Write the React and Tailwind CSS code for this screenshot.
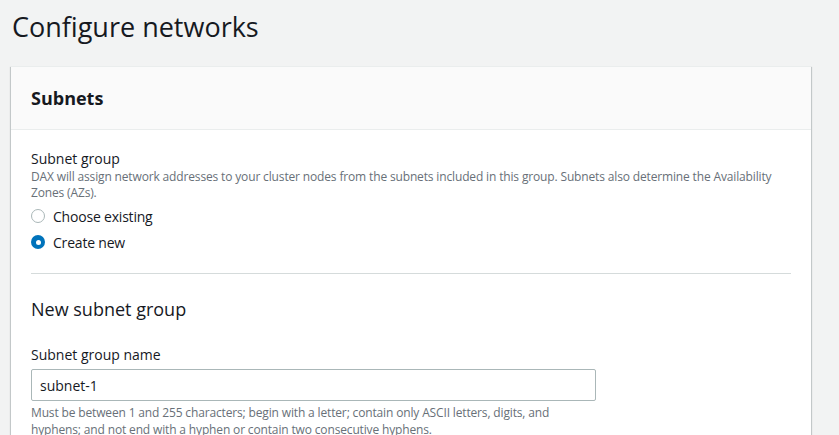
import { useState } from 'react';

const font = { fontFamily: '"Open Sans", "Noto Sans", Arial, sans-serif' };

function Radio({ checked, label, onClick }) {
  return (
    <label className="flex items-center gap-[8px] h-[26px] cursor-pointer" onClick={onClick}>
      {checked ? (
        <span className="w-[14px] h-[14px] rounded-full bg-[#0073bb] flex items-center justify-center">
          <span className="w-[5px] h-[5px] rounded-full bg-white" />
        </span>
      ) : (
        <span className="w-[14px] h-[14px] rounded-full border border-[#aab7b8] bg-white" />
      )}
      <span className="text-[14px] tracking-[-0.2px] text-[#16191f]">{label}</span>
    </label>
  );
}

export default function App() {
  const [mode, setMode] = useState('new');

  return (
    <div className="min-h-screen bg-[#f2f3f3] text-[#16191f] overflow-hidden" style={font}>
      <h1 className="pl-[12px] pt-[10px] text-[27px] leading-[34px] font-normal">Configure networks</h1>

      {/* Subnets card */}
      <div className="ml-[11px] mt-[22px] w-[800px] bg-white border-t border-[#eaeded] shadow-[0_1px_1px_0_rgba(0,28,36,0.3),1px_1px_1px_0_rgba(0,28,36,0.15),-1px_1px_1px_0_rgba(0,28,36,0.15)]">
        <div className="h-[63px] bg-[#fafafa] border-b border-[#eaeded] px-[20px] flex items-center">
          <h2 className="text-[18px] font-bold">Subnets</h2>
        </div>

        <div className="px-[20px] pt-[19px] pb-[20px]">
          <div className="text-[14px] leading-[20px]">Subnet group</div>
          <p className="text-[12px] leading-[16px] tracking-[-0.15px] text-[#687078]">
            DAX will assign network addresses to your cluster nodes from the subnets included in this group. Subnets also determine the Availability Zones (AZs).
          </p>
          <div className="mt-[2px] flex flex-col">
            <Radio checked={mode === 'existing'} label="Choose existing" onClick={() => setMode('existing')} />
            <Radio checked={mode === 'new'} label="Create new" onClick={() => setMode('new')} />
          </div>

          <div className="mt-[18px] border-t border-[#d5dbdb]" />

          <h3 className="mt-[23px] text-[18px] leading-[24px] font-normal">New subnet group</h3>

          <div className="mt-[24px] text-[14px] leading-[20px]">Subnet group name</div>
          <input
            className="mt-[4px] w-[565px] h-[32px] border border-[#aab7b8] rounded-[2px] px-[8px] text-[14px] text-[#16191f] outline-none"
            style={font}
            defaultValue="subnet-1"
          />
          <p className="mt-[3px] w-[560px] text-[12px] leading-[17px] tracking-[-0.15px] text-[#687078]">
            Must be between 1 and 255 characters; begin with a letter; contain only ASCII letters, digits, and hyphens; and not end with a hyphen or contain two consecutive hyphens.
          </p>
        </div>
      </div>
    </div>
  );
}
